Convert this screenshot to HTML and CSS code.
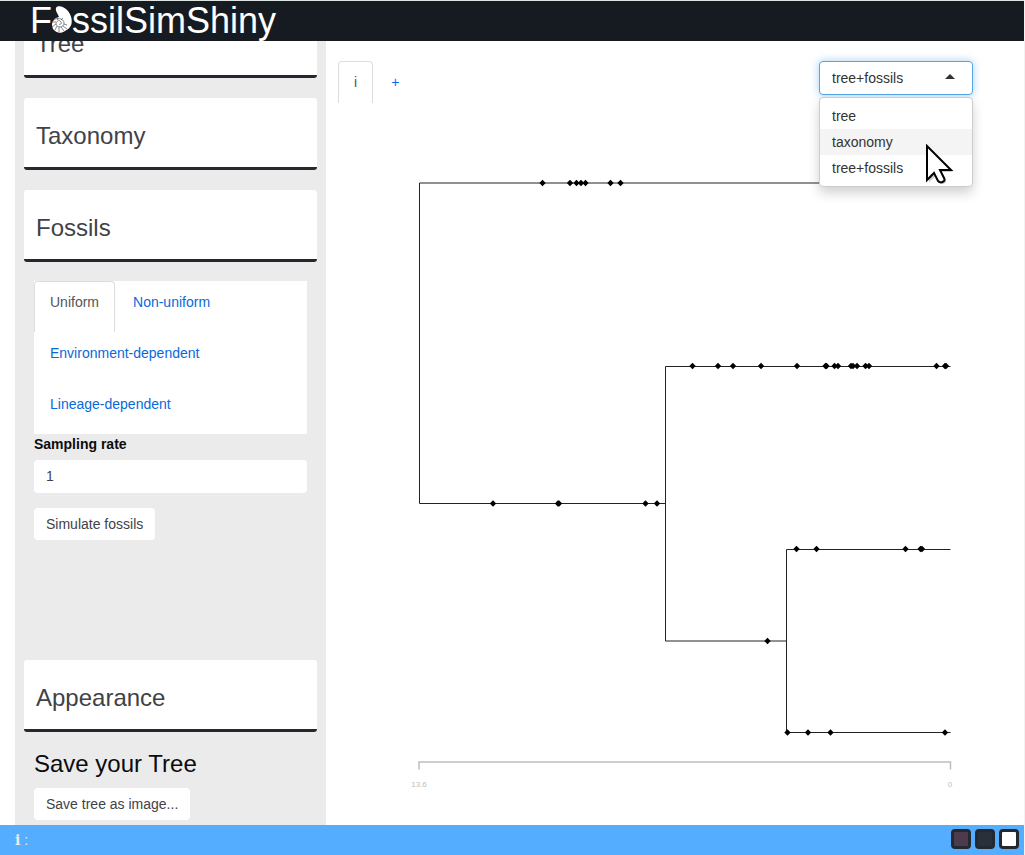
FILE: index.html
```html
<!DOCTYPE html>
<html lang="en">
<head>
<meta charset="utf-8">
<meta name="viewport" content="width=device-width, initial-scale=1">
<title>FossilSimShiny</title>
<link rel="stylesheet" href="styles.css">
</head>
<body>
<div class="app">
  <header class="topbar">
    <h1 class="brand"><span>F</span><svg class="shell" viewBox="0 0 20 28" role="img" aria-label="o">
      <path fill="#fff" d="M4 2C5-1 12 0 16 5c4 5 5 12 2 16-2 3-4 3-5 4-4 3-9 2-12-2-2-4-1-9 3-11 1 0 2-1 3-1C6 8 3 5 4 2z"/>
      <g fill="none" stroke="#343a40" stroke-width=".6">
        <path d="M1 15c3-4 11-3 11 2 0 5-7 5-8 1 0-3 4-5 5-2 1 2-1 3-2 2"/>
        <path d="M6 14l-1-2M4 16l-4 0M4 18l-4 3M5 20l-2 4M7 21l0 5M9 21l3 4M11 20l4 3M12 18l3 1M9 14l2-2"/>
      </g>
    </svg><span>ssilSimShiny</span></h1>
  </header>

  <main class="layout">
    <aside class="sidebar">
      <button class="section" type="button">Tree</button>
      <button class="section" type="button">Taxonomy</button>
      <button class="section" type="button" aria-expanded="true">Fossils</button>
      <div class="panel">
        <nav class="subtabs" aria-label="Fossil models">
          <a class="subtab active" href="#uniform">Uniform</a>
          <a class="subtab" href="#non-uniform">Non-uniform</a>
          <a class="subtab" href="#environment">Environment-dependent</a>
          <a class="subtab" href="#lineage">Lineage-dependent</a>
        </nav>
        <label class="label" for="rate">Sampling rate</label>
        <input class="field" id="rate" type="text" inputmode="decimal" value="1">
        <button class="btn" type="button">Simulate fossils</button>
      </div>
      <button class="section" type="button">Appearance</button>
      <div class="save">
        <h2 class="heading">Save your Tree</h2>
        <button class="btn" type="button">Save tree as image...</button>
      </div>
    </aside>

    <section class="view">
      <div class="toolbar">
        <nav class="tabs" aria-label="Trees">
          <a class="tab active" href="#i">i</a>
          <a class="tab" href="#add">+</a>
        </nav>
        <div class="picker">
          <select class="select" aria-label="Plot type">
            <option>tree</option>
            <option>taxonomy</option>
            <option selected>tree+fossils</option>
          </select>
          <svg class="caret" viewBox="0 0 10 5" aria-hidden="true"><path d="M0 5l5-5 5 5z" fill="#333"/></svg>
          <ul class="menu" role="listbox" aria-label="Plot type options">
            <li class="option" role="option">tree</li>
            <li class="option hover" role="option">taxonomy</li>
            <li class="option" role="option" aria-selected="true">tree+fossils</li>
          </ul>
          <svg class="cursor" viewBox="0 0 29 42" aria-hidden="true">
            <path d="M4 4v34l7-6 3 6q4 4 7 0v-3l-4-7h11z" fill="#000" opacity=".2"/>
            <path d="M2 2v34l7-7 4 8q3 3 6 0 1-1 0-3l-4-8h11z" fill="#fff" stroke="#000" stroke-width="2"/>
          </svg>
        </div>
      </div>
      <svg class="plot" viewBox="338 103 674 722" role="img" aria-label="Phylogenetic tree with fossils">
        <defs><path id="d" d="M-3.2 0L0-3.2 3.2 0 0 3.2z"/></defs>
        <path fill="none" stroke="#222" stroke-width="1" d="M950.5 183H419.5V503.500H665.500M950.500 366.500H665.500V641H786.500M950.500 549.500H786.500V732.500H950.500"/>
        <path fill="none" stroke="#bebebe" stroke-width="1.500" d="M419 769.500V762H950.500V769.500"/>
        <g>
          <use href="#d" x="542.500" y="183"/><use href="#d" x="570" y="183"/><use href="#d" x="576.500" y="183"/><use href="#d" x="581" y="183"/><use href="#d" x="585.500" y="183"/><use href="#d" x="610.500" y="183"/><use href="#d" x="620.500" y="183"/>
          <use href="#d" x="692.500" y="366"/><use href="#d" x="718" y="366"/><use href="#d" x="733" y="366"/><use href="#d" x="761" y="366"/><use href="#d" x="797" y="366"/><use href="#d" x="825.500" y="366"/><use href="#d" x="826.500" y="366"/><use href="#d" x="834.500" y="366"/><use href="#d" x="838" y="366"/><use href="#d" x="851" y="366"/><use href="#d" x="853" y="366"/><use href="#d" x="857" y="366"/><use href="#d" x="865.500" y="366"/><use href="#d" x="869" y="366"/><use href="#d" x="936.500" y="366"/><use href="#d" x="945" y="366"/><use href="#d" x="946" y="366"/>
          <use href="#d" x="493" y="503.500"/><use href="#d" x="558" y="503.500"/><use href="#d" x="559" y="503.500"/><use href="#d" x="645.500" y="503.500"/><use href="#d" x="657" y="503.500"/>
          <use href="#d" x="796.500" y="549"/><use href="#d" x="816.500" y="549"/><use href="#d" x="905.500" y="549"/><use href="#d" x="920.500" y="549"/><use href="#d" x="922" y="549"/>
          <use href="#d" x="767.500" y="641"/>
          <use href="#d" x="787.500" y="732.500"/><use href="#d" x="808" y="732.500"/><use href="#d" x="830.500" y="732.500"/><use href="#d" x="945" y="732.500"/>
        </g>
        <g class="axis"><text x="419" y="787">13.6</text><text x="950" y="787">0</text></g>
      </svg>
    </section>
  </main>

  <footer class="statusbar">
    <p class="status"><b class="info">i</b> :</p>
    <div class="themes">
      <button class="swatch plum" type="button" aria-label="Plum theme"></button>
      <button class="swatch dark" type="button" aria-label="Dark theme"></button>
      <button class="swatch light" type="button" aria-label="Light theme"></button>
    </div>
  </footer>
</div>
</body>
</html>
```
FILE: styles.css
```css
* { box-sizing: border-box; }
html { background: #f2f2f2; }
body {
  margin: 0;
  font: 14px/20px "Liberation Sans", Arial, sans-serif;
  color: #0b0c0e;
}
button, input, select { font: inherit; color: #3f4248; }
a { color: #0969da; text-decoration: none; }

.app {
  height: 100vh;
  margin-right: 1px;
  overflow: hidden;
  background: #fff;
}
.topbar {
  position: fixed;
  inset: 0 1px auto 0;
  z-index: 2;
  height: 41px;
  padding-left: 30px;
  border-top: 1px solid #dde5e3;
  background: #161b22;
}
.brand {
  display: flex;
  align-items: center;
  margin: 0;
  font-size: 36px;
  font-weight: 400;
  line-height: 40px;
  color: #fff;
}
.shell { width: 20px; height: 28px; margin-bottom: 2px; }

.layout {
  display: flex;
  gap: 12px;
  min-height: 100%;
  padding: 0 12px 30px 15px;
}
.sidebar {
  flex: 0 0 311px;
  padding: 6px 9px 0;
  background: #ebebeb;
}
.section {
  display: block;
  width: 100%;
  height: 72px;
  margin-bottom: 20px;
  padding: 7px 12px 0;
  border: 0;
  border-bottom: 3px solid #24292f;
  border-radius: 3px;
  background: #fff;
  font-size: 24px;
  text-align: left;
}
.panel { min-height: 378px; padding: 0 10px; margin-top: -1px; margin-bottom: 1px; }
.subtabs { display: flex; flex-wrap: wrap; background: #fff; }
.subtab {
  height: 51px;
  margin-right: 2px;
  padding: 10px 15px;
  border: 1px solid transparent;
  border-bottom: 0;
  border-radius: 4px 4px 0 0;
}
.subtab.active, .tab.active { border-color: #ddd; color: #555; }
.label { display: block; margin-bottom: 6px; font-weight: 700; }
.field {
  display: block;
  width: 100%;
  height: 33px;
  margin-bottom: 15px;
  padding: 5px 12px 7px;
  border: 0;
  border-radius: 4px;
  background: #fff;
}
.btn {
  height: 32px;
  padding: 6px 12px;
  border: 0;
  border-radius: 4px;
  background: #fff;
}
.save { padding: 0 10px; }
.heading { margin: 0 0 12px; font-size: 24px; font-weight: 400; line-height: 24px; }

.view { flex: 1; min-width: 0; padding-top: 61px; }
.toolbar { display: flex; justify-content: space-between; height: 42px; padding-right: 39px; }
.tabs { display: flex; gap: 2px; }
.tab {
  height: 42px;
  padding: 10px 15px;
  border: 1px solid transparent;
  border-bottom: 0;
  border-radius: 4px 4px 0 0;
}
.picker { position: relative; width: 154px; }
.select {
  appearance: none;
  width: 100%;
  height: 34px;
  padding: 0 12px;
  border: 1px solid #55a5e8;
  border-radius: 4px;
  background: #fff;
  box-shadow: 0 0 8px rgba(102, 175, 233, .6);
  color: #333;
}
.caret { position: absolute; top: 13px; right: 18px; width: 10px; height: 5px; }
.menu {
  position: absolute;
  top: 36px;
  left: 0;
  width: 100%;
  margin: 0;
  padding: 5px 0;
  border: 1px solid #ccc;
  border-radius: 4px;
  background: #fff;
  box-shadow: 0 6px 12px rgba(0, 0, 0, .18);
  list-style: none;
  color: #333;
}
.option { padding: 3px 12px; }
.option.hover { background: #f4f4f4; }
.cursor { position: absolute; top: 83px; left: 106px; width: 29px; height: 42px; }
.plot { display: block; width: 100%; height: auto; }
.axis { fill: #bebebe; font-size: 8px; text-anchor: middle; }

.statusbar {
  position: fixed;
  inset: auto 1px 0 0;
  z-index: 2;
  display: flex;
  align-items: center;
  justify-content: space-between;
  height: 30px;
  padding: 0 5px 2px 15px;
  background: #54adff;
  color: #ebebeb;
}
.status { margin: 2px 0 0; }
.info { font-family: "DejaVu Serif", serif; }
.themes { display: flex; gap: 4px; }
.swatch {
  width: 20px;
  height: 20px;
  padding: 0;
  border: 3px solid #24292f;
  border-radius: 4px;
}
.plum { background: #4c3b4d; }
.dark { background: #28313b; }
.light { background: #fff; }
```
